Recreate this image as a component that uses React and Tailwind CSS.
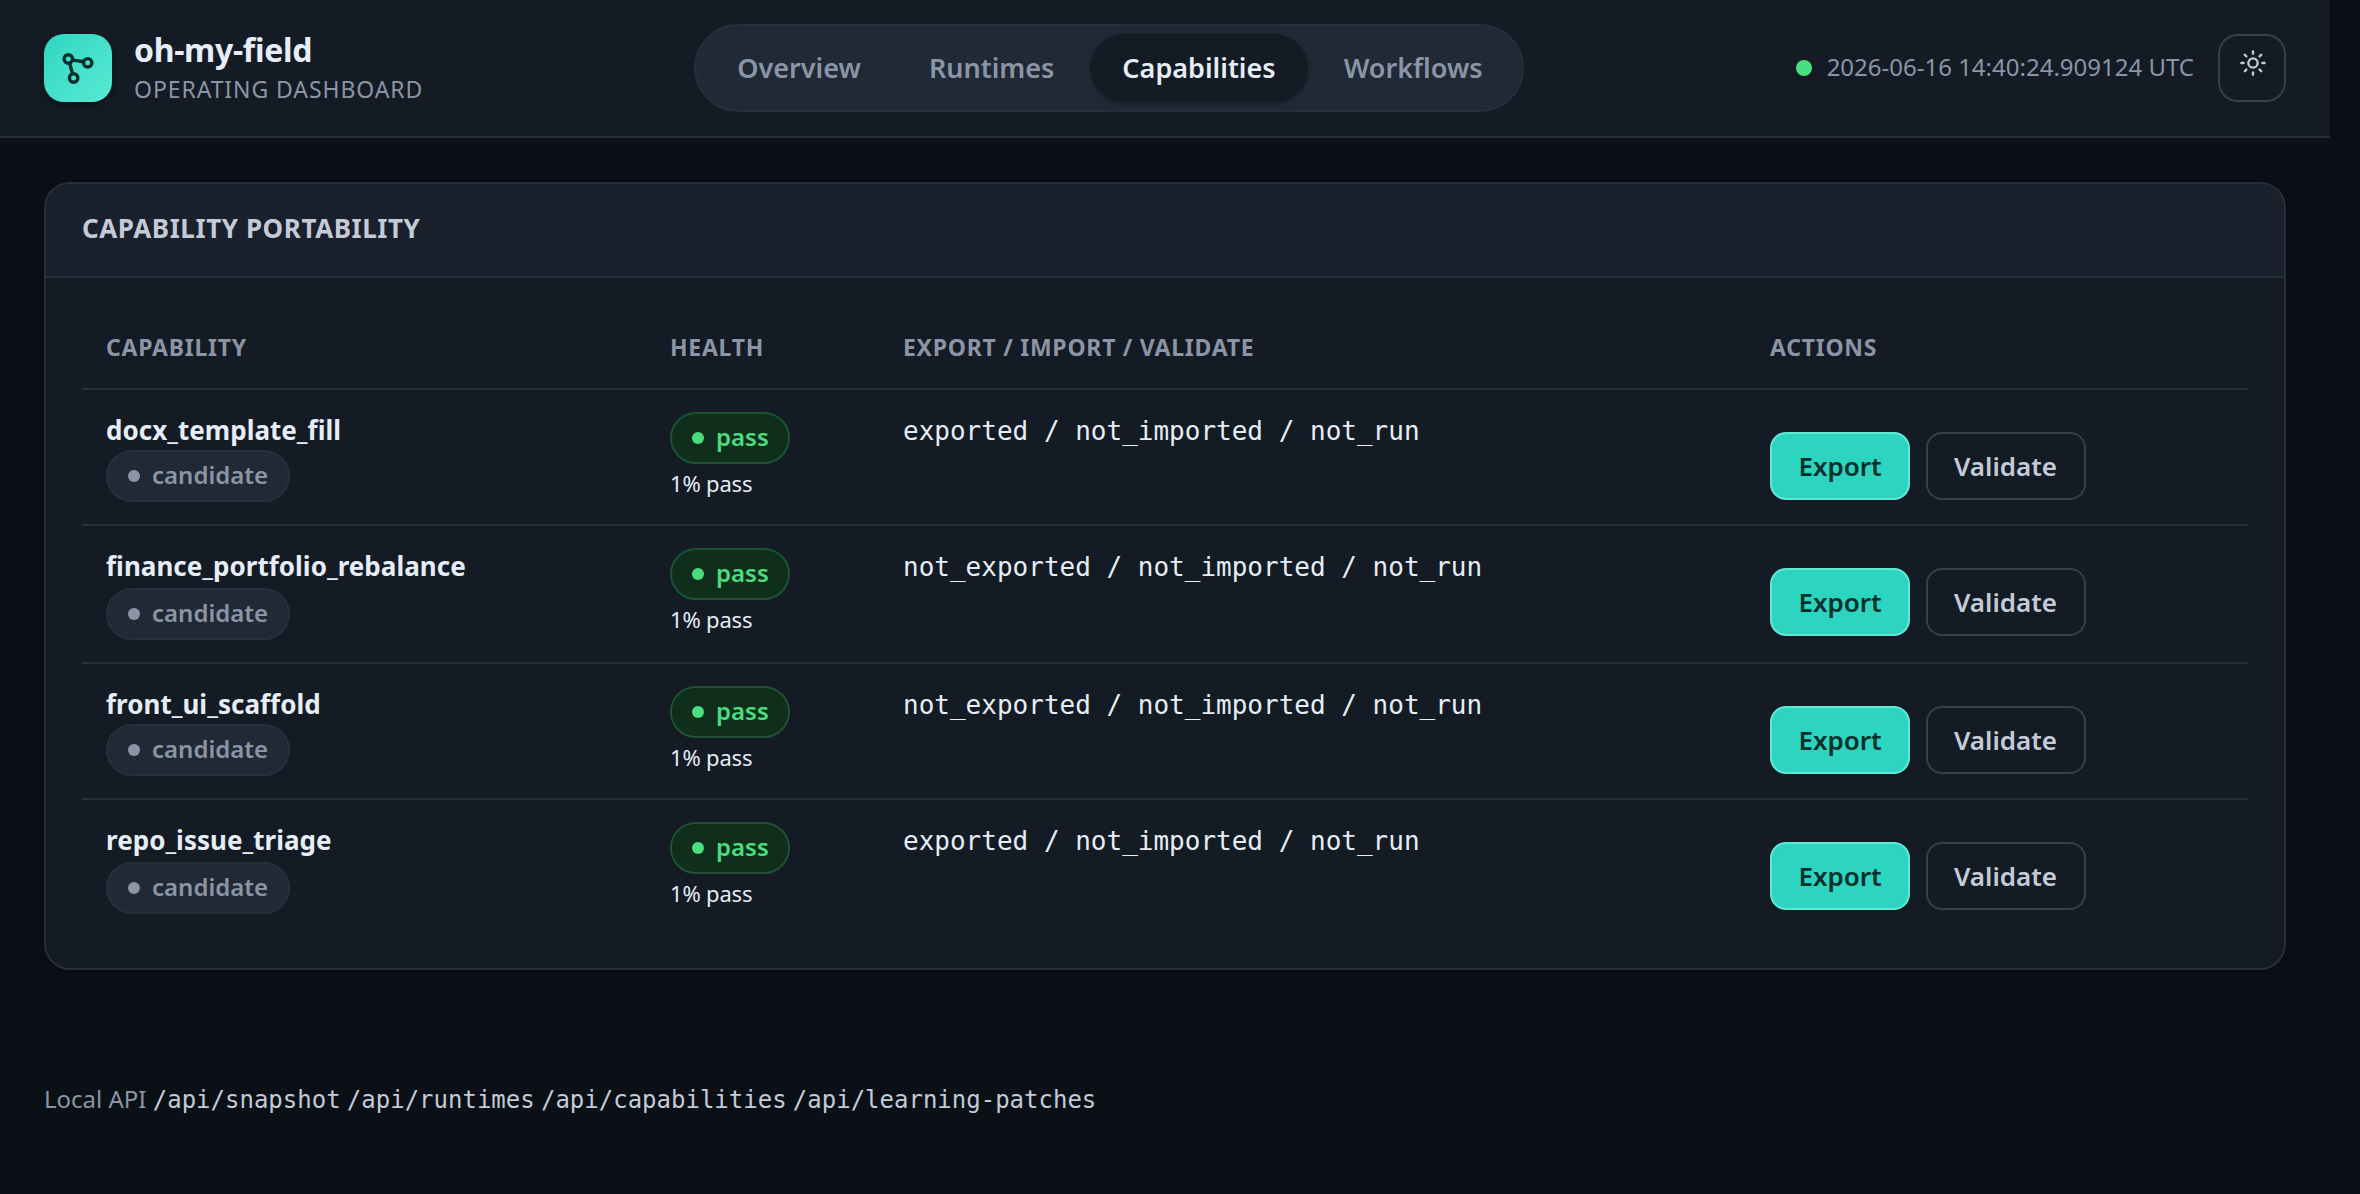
import { Sun } from "lucide-react";

const NAV = ["Overview", "Runtimes", "Capabilities", "Workflows"];

const ROWS = [
  { name: "docx_template_fill", state: "exported / not_imported / not_run", height: "h-[136px]", badge: "mt-[2px]" },
  { name: "finance_portfolio_rebalance", state: "not_exported / not_imported / not_run", height: "h-[138px]", badge: "mt-[4px]" },
  { name: "front_ui_scaffold", state: "not_exported / not_imported / not_run", height: "h-[136px]", badge: "mt-[2px]" },
  { name: "repo_issue_triage", state: "exported / not_imported / not_run", height: "h-[132px]", badge: "mt-[4px]" },
];

const ENDPOINTS = ["/api/snapshot", "/api/runtimes", "/api/capabilities", "/api/learning-patches"];

const COLS = "grid grid-cols-[564px_233px_867px_502px]";
const MONO = "font-['DejaVu_Sans_Mono',monospace]";

function Logo() {
  return (
    <div className="size-[68px] rounded-[20px] bg-linear-135 from-[#2fd6c2] to-[#56ead3] shadow-[0_2px_6px_rgba(0,0,0,0.4)]">
      <svg viewBox="0 0 68 68" className="size-full" fill="none" stroke="#04302b" strokeWidth="3.4">
        <circle cx="24.3" cy="25" r="4.2" />
        <circle cx="43.7" cy="28.8" r="4.2" />
        <circle cx="29.6" cy="44" r="4.2" />
        <path d="M28.2 25.9 39.5 27.7M25.7 29.2 28.5 39.8" />
      </svg>
    </div>
  );
}

function Badge({ tone, children }) {
  const tones = {
    good: "w-[120px] border-[#1d5237] bg-[#0f2e1c] text-[#4ade80]",
    muted: "w-[184px] border-[#26303c] bg-[#202a36] text-[#8b95a5]",
  };
  return (
    <span
      className={`flex h-[52px] items-center gap-[12px] rounded-full border-2 pl-5 text-[24px] font-semibold ${tones[tone]}`}
    >
      <span className="size-3 rounded-full bg-current" />
      <span className="-mt-[2px] leading-[32px]">{children}</span>
    </span>
  );
}

function Header() {
  return (
    <header className="flex h-[138px] w-[2330px] items-center border-b-2 border-[#262f3a] bg-[#141b24] px-[44px]">
      <div className="flex w-[650px] items-center gap-[22px]">
        <Logo />
        <div className="flex flex-col">
          <span className="text-[32px] leading-[38px] font-bold tracking-[-0.01em] text-[#e6edf6]">oh-my-field</span>
          <span className="mt-[4px] mb-px text-[23px] leading-[32px] tracking-[0.04em] text-[#8b95a5]">
            OPERATING DASHBOARD
          </span>
        </div>
      </div>
      <nav className="flex h-[88px] w-[830px] justify-center gap-[4px] rounded-full border-2 border-[#26303c] bg-[#202a36] py-[8px] pr-[7px] pl-[9px]">
        {NAV.map((item) => (
          <button
            key={item}
            className={`rounded-full px-8 text-[27px] font-semibold ${
              item === "Capabilities" ? "bg-[#141b24] text-[#e6edf6] shadow-[0_2px_4px_rgba(0,0,0,0.3)]" : "text-[#8b95a5]"
            }`}
          >
            {item}
          </button>
        ))}
      </nav>
      <div className="flex flex-1 items-center justify-end">
        <span className="mr-[15px] size-4 rounded-full bg-[#4ade80]" />
        <span className="mr-[24px] pb-[2px] text-[24px] text-[#8b95a5]">2026-06-16 14:40:24.909124 UTC</span>
        <button className="flex size-[68px] justify-center rounded-[20px] border-2 border-[#35404d] pt-[13px] pl-[2px] text-[#c3cbd8]">
          <Sun size={28} strokeWidth={2} />
        </button>
      </div>
    </header>
  );
}

function Row({ row, last }) {
  return (
    <div className={`${COLS} ${row.height} ${last ? "" : "border-b-2 border-[#262f3a]"}`}>
      <div className="pt-[22px] pl-6">
        <div className="text-[26px] leading-[36px] font-bold tracking-[0.001em] text-[#e6edf6]">{row.name}</div>
        <div className={row.badge}>
          <Badge tone="muted">candidate</Badge>
        </div>
      </div>
      <div className="pt-[22px] pl-6">
        <Badge tone="good">pass</Badge>
        <div className="mt-[4px] text-[22px] leading-[30px] tracking-[-0.008em] text-[#e6edf6]">1% pass</div>
      </div>
      <div className={`pt-[23px] pl-6 text-[26px] leading-[36px] text-[#e6edf6] ${MONO}`}>{row.state}</div>
      <div className="flex gap-4 pt-[42px] pl-6">
        <button className="h-[68px] w-[140px] rounded-[16px] border-2 border-[#5eead4] bg-[#2dd4bf] text-[26px] font-semibold text-[#04302b]">
          Export
        </button>
        <button className="h-[68px] w-[160px] rounded-[16px] border-2 border-[#35404d] pr-px text-[26px] font-semibold text-[#c3cbd8]">
          Validate
        </button>
      </div>
    </div>
  );
}

export default function App() {
  return (
    <div className="h-[1194px] overflow-hidden bg-[#0b1017] font-['Noto_Sans',sans-serif]">
      <Header />
      <main className="px-[44px] pt-[44px]">
        <section className="h-[788px] w-[2242px] overflow-hidden rounded-[26px] border-2 border-[#262f3a] bg-[#141b24] shadow-[0_2px_6px_rgba(0,0,0,0.4)]">
          <div className="flex h-[94px] items-center border-b-2 border-[#262f3a] bg-[#1a212d] px-9 pb-[4px]">
            <h2 className="text-[26px] font-bold tracking-[0.022em] text-[#c3cbd8]">CAPABILITY PORTABILITY</h2>
          </div>
          <div className="px-9">
            <div
              className={`${COLS} h-[112px] border-b-2 border-[#262f3a] pt-[53px] text-[23px] leading-[32px] font-bold tracking-[0.032em] text-[#8b95a5]`}
            >
              {["CAPABILITY", "HEALTH", "EXPORT / IMPORT / VALIDATE", "ACTIONS"].map((heading) => (
                <div key={heading} className="pl-6">
                  {heading}
                </div>
              ))}
            </div>
            {ROWS.map((row, i) => (
              <Row key={row.name} row={row} last={i === ROWS.length - 1} />
            ))}
          </div>
        </section>
      </main>
      <footer className="mt-[111px] pl-[44px] text-[24px] leading-[36px] text-[#8b95a5]">
        Local API{" "}
        {ENDPOINTS.map((path) => (
          <span key={path}>
            <code className={`text-[#c3cbd8] ${MONO}`}>{path}</code>{" "}
          </span>
        ))}
      </footer>
    </div>
  );
}
